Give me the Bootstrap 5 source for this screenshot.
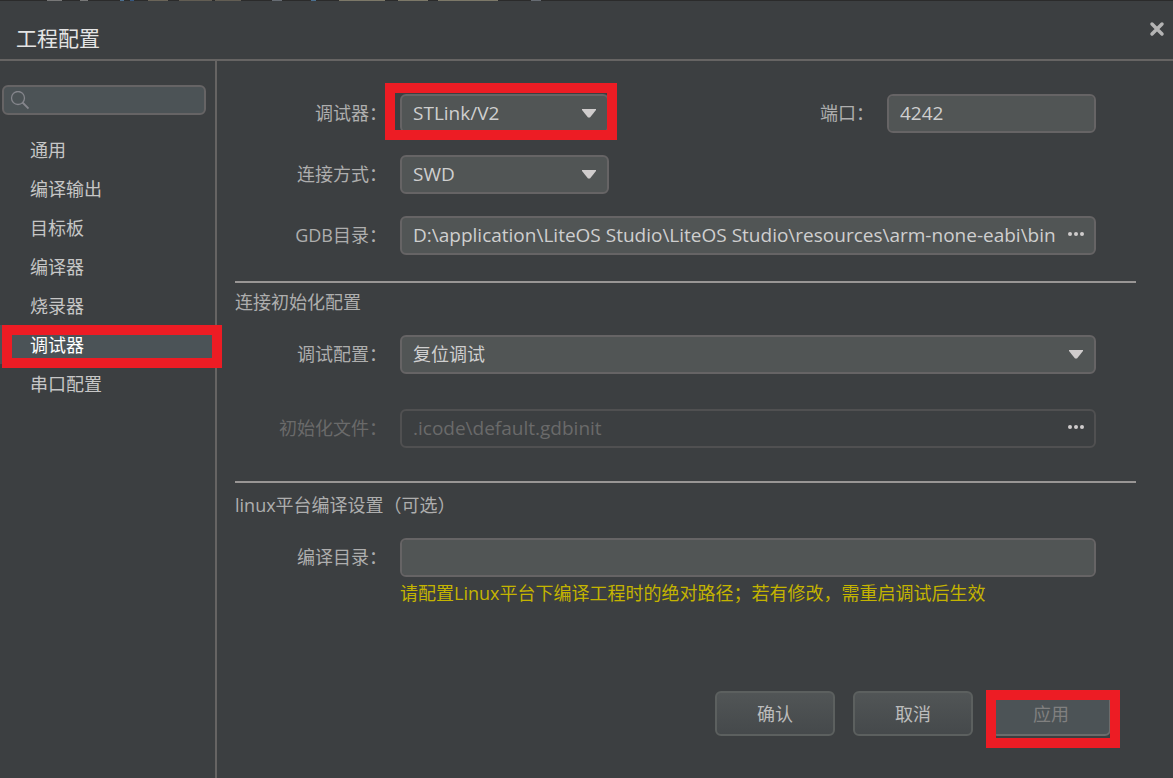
<!DOCTYPE html>
<html lang="zh-CN">
<head>
<meta charset="utf-8">
<meta name="viewport" content="width=device-width, initial-scale=1">
<title>工程配置</title>
<link rel="stylesheet" href="https://cdn.jsdelivr.net/npm/bootstrap@5.3.0/dist/css/bootstrap.min.css">
<style>
  body {
    background: #3c3f41;
    color: #aeaeae;
    font-family: "Open Sans", "Noto Sans CJK SC", sans-serif;
    font-size: 18px;
    line-height: 24px;
  }
  /* sliver of the editor window behind the dialog */
  .editor-edge {
    height: 1px;
    background: linear-gradient(90deg, #2b2b2b 47px, #777 47px 62px, #2b2b2b 62px 80px, #777 80px 88px,
      #2b2b2b 88px 120px, #4c7090 120px 124px, #2b2b2b 124px 130px, #365880 130px 134px, #2b2b2b 134px 148px,
      #6a6458 148px 168px, #2b2b2b 168px 179px, #625d53 179px 212px, #2b2b2b 212px 215px, #625d53 215px 241px,
      #2b2b2b 241px 272px, #666b72 272px 282px, #2b2b2b 282px 311px, #4c7090 311px 316px, #2b2b2b 316px 339px,
      #7c7868 339px 385px, #2b2b2b 385px 398px, #7c7868 398px 428px, #2b2b2b 428px 438px, #7c7868 438px 498px,
      #2b2b2b 498px 531px, #666b72 531px 541px, #2b2b2b 541px);
  }
  .dialog-head { height: 60px; border-bottom: 2px solid #666463; padding: 6px 7px 0 16px; }
  .dialog-title { font-size: 21px; line-height: 30px; color: #e4e4e4; padding-top: 16px; }
  .close-x { margin-top: 13px; color: #b4b4b4; }

  .side { width: 217px; border-right: 2px solid #666463; padding-top: 24px; }
  .search-box { height: 30px; margin: 0 9px 15px 2px; }
  .search-box svg { left: 8px; top: 6px; }
  .search-box .form-control {
    height: 30px; padding: 0 8px 0 32px; border-radius: 6px; background: #4c5356;
  }
  .side .nav-link { color: #c6c6c6; padding: 8px 30px 7px; }
  .side .nav-link.active { background: #4b5357; color: #fff; }

  .pane { padding: 33px 37px 42px 18px; }
  .field-row { margin-right: 40px; }
  .field-row + .field-row { margin-top: 22px; }
  .field-label { width: 152px; text-align: right; margin-right: 13px; padding-bottom: 2px; }
  .port-label { margin-right: 13px; padding-bottom: 2px; }
  .form-control, .form-select, .path-box {
    height: 39px;
    border: 2px solid #666465;
    border-radius: 6px;
    background-color: #515555;
    color: #cfcfcf;
    font-size: 19px;
    line-height: 24px;
    padding: 0 11px 2px;
  }
  .form-control:focus, .form-select:focus { background-color: #515555; color: #cfcfcf; border-color: #8a8a8a; box-shadow: none; }
  .form-select {
    background-image: url("data:image/svg+xml,%3Csvg xmlns='http://www.w3.org/2000/svg' viewBox='0 0 14 9'%3E%3Cpath d='M0 0h14v1L8 8.500H6L0 1z' fill='%23cfcccc'/%3E%3C/svg%3E");
    background-size: 14px 9px;
    background-position: right 11px center;
    padding-right: 32px;
  }
  .form-select.cjk { font-size: 18px; }
  .w-short { width: 209px; }
  .path-box { padding-right: 8px; }
  .path-box input { color: inherit; line-height: 24px; outline: 0; min-width: 0; }
  .path-box button, .path-box button:hover { line-height: 1; color: #cfcccc; }
  .is-off { color: #6a6a6a; }
  .path-box.is-off { background: transparent; border-color: #505051; }

  .section { border-top: 2px solid #999695; }
  .section-init { margin-top: 26px; padding-top: 7px; }
  .section-init .field-row + .field-row { margin-top: 35px; }
  .section-linux { margin-top: 33px; padding-top: 10px; }
  .section-title { font-size: 18px; line-height: 24px; margin: 0 0 21px; }
  .hint { color: #c4b400; margin: 4px 0 0 165px; }

  .actions { gap: 18px; margin-right: 25px; }
  .action { width: 120px; height: 45px; border: 2px solid #5c605f; border-radius: 6px; color: #bcbcbc;
    background: linear-gradient(#515556, #45494b); font-size: 18px; line-height: 24px; padding: 0; }
  .action:hover { border-color: #8a8a8a; color: #ddd; }
  .action:disabled { background: #4c5356; border-color: #6c6c6c; color: #808080; opacity: 1; }

  .frame { position: absolute; border: 10px solid #ed1c24; pointer-events: none; z-index: 2; }
  .frame-field { inset: -11px -8px -7px -15px; }
  .frame-nav { inset: 0 -7px -4px 2px; }
  .frame-action { inset: -1px -9px -12px -5px; }
</style>
</head>
<body>
<div class="d-flex flex-column min-vh-100">
  <div class="editor-edge"></div>
  <header class="dialog-head d-flex justify-content-between align-items-start">
    <h1 class="dialog-title m-0 fw-normal">工程配置</h1>
    <button type="button" class="close-x btn p-0 border-0 d-flex" aria-label="关闭">
      <svg width="18" height="18" viewBox="0 0 18 18" fill="none" stroke="currentColor" stroke-width="3.500" stroke-linecap="round"><path d="M4 4l10 10M14 4L4 14"/></svg>
    </button>
  </header>
  <div class="d-flex flex-grow-1">
    <aside class="side flex-shrink-0">
      <div class="search-box position-relative">
        <svg class="position-absolute" width="19" height="19" viewBox="0 0 19 19" fill="none" stroke="#85868c" stroke-width="1.300"><circle cx="8" cy="7" r="6.500"/><path d="M12.500 11.500l6 6" stroke-width="1.800"/></svg>
        <input type="search" class="form-control" aria-label="搜索">
      </div>
      <nav class="nav flex-column">
        <a class="nav-link" href="#">通用</a>
        <a class="nav-link" href="#">编译输出</a>
        <a class="nav-link" href="#">目标板</a>
        <a class="nav-link" href="#">编译器</a>
        <a class="nav-link" href="#">烧录器</a>
        <div class="position-relative">
          <a class="nav-link active" aria-current="page" href="#">调试器</a>
          <span class="frame frame-nav"></span>
        </div>
        <a class="nav-link" href="#">串口配置</a>
      </nav>
    </aside>
    <main class="pane flex-grow-1 d-flex flex-column">
      <div class="field-row d-flex align-items-center">
        <label class="field-label" for="debugger">调试器：</label>
        <div class="position-relative">
          <select id="debugger" class="form-select w-short"><option>STLink/V2</option></select>
          <span class="frame frame-field"></span>
        </div>
        <label class="port-label ms-auto" for="port">端口：</label>
        <input id="port" type="text" class="form-control w-short" value="4242">
      </div>
      <div class="field-row d-flex align-items-center">
        <label class="field-label" for="mode">连接方式：</label>
        <select id="mode" class="form-select w-short"><option>SWD</option></select>
      </div>
      <div class="field-row d-flex align-items-center">
        <label class="field-label" for="gdb">GDB目录：</label>
        <div class="path-box d-flex align-items-center flex-grow-1">
          <input id="gdb" type="text" class="flex-grow-1 bg-transparent border-0 p-0" value="D:\application\LiteOS Studio\LiteOS Studio\resources\arm-none-eabi\bin">
          <button type="button" class="btn p-0 border-0" aria-label="浏览"><svg class="d-block" width="20" height="8" viewBox="0 0 20 8" fill="currentColor"><circle cx="4" cy="3" r="2"/><circle cx="10" cy="3" r="2"/><circle cx="16" cy="3" r="2"/></svg></button>
        </div>
      </div>

      <section class="section section-init">
        <h2 class="section-title fw-normal">连接初始化配置</h2>
        <div class="field-row d-flex align-items-center">
          <label class="field-label" for="config">调试配置：</label>
          <select id="config" class="form-select cjk flex-grow-1 w-auto"><option>复位调试</option></select>
        </div>
        <div class="field-row d-flex align-items-center">
          <label class="field-label is-off" for="init">初始化文件：</label>
          <div class="path-box is-off d-flex align-items-center flex-grow-1">
            <input id="init" type="text" class="flex-grow-1 bg-transparent border-0 p-0" value=".icode\default.gdbinit" disabled>
            <button type="button" class="btn p-0 border-0" aria-label="浏览"><svg class="d-block" width="20" height="8" viewBox="0 0 20 8" fill="currentColor"><circle cx="4" cy="3" r="2"/><circle cx="10" cy="3" r="2"/><circle cx="16" cy="3" r="2"/></svg></button>
          </div>
        </div>
      </section>

      <section class="section section-linux">
        <h2 class="section-title fw-normal">linux平台编译设置（可选）</h2>
        <div class="field-row d-flex align-items-center">
          <label class="field-label" for="build">编译目录：</label>
          <input id="build" type="text" class="form-control flex-grow-1 w-auto">
        </div>
        <p class="hint">请配置Linux平台下编译工程时的绝对路径；若有修改，需重启调试后生效</p>
      </section>

      <div class="actions d-flex justify-content-end mt-auto">
        <button type="button" class="btn action">确认</button>
        <button type="button" class="btn action">取消</button>
        <div class="position-relative">
          <button type="button" class="btn action" disabled>应用</button>
          <span class="frame frame-action"></span>
        </div>
      </div>
    </main>
  </div>
</div>
<script src="https://cdn.jsdelivr.net/npm/bootstrap@5.3.0/dist/js/bootstrap.bundle.min.js"></script>
</body>
</html>
